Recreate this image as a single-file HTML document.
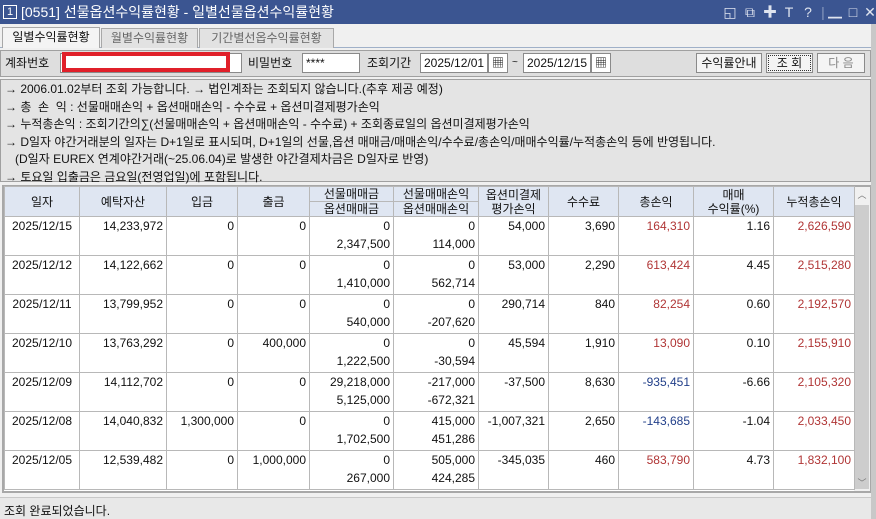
<!DOCTYPE html>
<html><head><meta charset="utf-8"><style>
*{margin:0;padding:0;box-sizing:border-box}
body{width:876px;height:519px;overflow:hidden;background:#f0f0f0;font-family:"Liberation Sans","Noto Sans CJK KR",sans-serif;font-size:12px;color:#111;position:relative}
.a{position:absolute}
.title{left:0;top:0;width:876px;height:24px;background:#3b5591;color:#fff;font-size:14px;line-height:24px;white-space:nowrap}
.ic{position:absolute;top:0;color:#dfe4ef;font-size:14px;line-height:24px;width:16px;text-align:center}
.tab{top:28px;height:20px;border:1px solid #a8a8a8;border-bottom:none;line-height:18px;text-align:center;background:#e2e2e2;color:#666;font-size:12px}
.inp{background:#fff;border:1px solid #8a8a8a;height:20px;line-height:18px;padding-left:3px}
.btn{height:20px;border:1px solid #8a8a8a;background:#f4f4f4;line-height:18px;text-align:center}
table{border-collapse:collapse;table-layout:fixed}
td{border:1px solid #b8b8b8;height:39px;vertical-align:top;text-align:right;padding:0 3px;line-height:18px;font-size:12px;background:#fff}
th{border:1px solid #b8b8b8;background:#dfe6f2;font-weight:normal;font-size:12px;line-height:14px;height:29px;padding:0}
.r{color:#b03535}.b{color:#23408a}
.info div{height:17.5px;line-height:17.5px;white-space:pre;overflow:hidden}
</style></head><body>
<div class="a title"><span style="position:absolute;left:3px;top:5px;width:14px;height:14px;border:1px solid #fff;font-size:11px;line-height:12px;text-align:center">1</span><span style="position:absolute;left:21px">[0551]  선물옵션수익률현황 - 일별선물옵션수익률현황</span>
<span class="ic" style="left:722px">◱</span><span class="ic" style="left:742px">⧉</span><span class="ic" style="left:762px">✚</span><span class="ic" style="left:781px">T</span><span class="ic" style="left:800px">?</span><span class="ic" style="left:815px;color:#8a9bc0">|</span><span class="ic" style="left:827px">▁</span><span class="ic" style="left:845px">□</span><span class="ic" style="left:862px">✕</span></div>
<div class="a" style="left:0;top:47px;width:871px;height:1px;background:#9fb0c8"></div>
<div class="a tab" style="left:2px;width:98px;background:#f4f4f4;color:#111;top:27px;height:21px">일별수익률현황</div>
<div class="a tab" style="left:101px;width:97px">월별수익률현황</div>
<div class="a tab" style="left:199px;width:135px">기간별선옵수익률현황</div>
<div class="a" style="left:0;top:50px;width:871px;height:27px;background:#dedede;border:1px solid #a0a0a0"></div>
<div class="a" style="left:5px;top:54px;line-height:18px">계좌번호</div>
<div class="a inp" style="left:60px;top:53px;width:182px"></div>
<div class="a" style="left:62px;top:52px;width:168px;height:20px;border:4px solid #e0202a;background:#fff"></div>
<div class="a" style="left:248px;top:54px;line-height:18px">비밀번호</div>
<div class="a inp" style="left:302px;top:53px;width:58px">****</div>
<div class="a" style="left:367px;top:54px;line-height:18px">조회기간</div>
<div class="a inp" style="left:420px;top:53px;width:68px">2025/12/01</div>
<div class="a btn" style="left:488px;top:53px;width:20px;background:#fff">▦</div>
<div class="a" style="left:512px;top:54px;line-height:18px;font-size:10px">~</div>
<div class="a inp" style="left:523px;top:53px;width:68px">2025/12/15</div>
<div class="a btn" style="left:591px;top:53px;width:20px;background:#fff">▦</div>
<div class="a btn" style="left:696px;top:53px;width:66px">수익률안내</div>
<div class="a btn" style="left:766px;top:53px;width:47px;outline:1px dotted #333;outline-offset:-3px">조 회</div>
<div class="a btn" style="left:817px;top:53px;width:48px;color:#888">다 음</div>
<div class="a info" style="left:0;top:79px;width:871px;height:103px;background:#e4e4e4;border:1px solid #a0a0a0;padding:1px 0 0 4px">
<div>→ 2006.01.02부터 조회 가능합니다. → 법인계좌는 조회되지 않습니다.(추후 제공 예정)</div>
<div>→ 총  손  익 : 선물매매손익 + 옵션매매손익 - 수수료 + 옵션미결제평가손익</div>
<div>→ 누적총손익 : 조회기간의∑(선물매매손익 + 옵션매매손익 - 수수료) + 조회종료일의 옵션미결제평가손익</div>
<div>→ D일자 야간거래분의 일자는 D+1일로 표시되며, D+1일의 선물,옵션 매매금/매매손익/수수료/총손익/매매수익률/누적총손익 등에 반영됩니다.</div>
<div>   (D일자 EUREX 연계야간거래(~25.06.04)로 발생한 야간결제차금은 D일자로 반영)</div>
<div>→ 토요일 입출금은 금요일(전영업일)에 포함됩니다.</div>
</div>
<div class="a" style="left:2px;top:185px;width:869px;height:308px;background:#fff;border:2px solid #a8a8a8"></div>
<div class="a" style="left:854px;top:187px;width:16px;height:304px;background:#f0f0f0"><div style="text-align:center;color:#777;font-size:9px;line-height:16px">︿</div><div style="position:absolute;left:1px;top:18px;width:14px;height:284px;background:#cdcdcd"></div><div style="position:absolute;bottom:0;width:16px;text-align:center;color:#777;font-size:9px;line-height:16px">﹀</div></div>
<table class="a" style="left:4px;top:186px;width:850px">
<colgroup><col style="width:75px"><col style="width:87px"><col style="width:71px"><col style="width:72px"><col style="width:84px"><col style="width:85px"><col style="width:70px"><col style="width:70px"><col style="width:75px"><col style="width:80px"><col style="width:81px"></colgroup>
<tr><th>일자</th><th>예탁자산</th><th>입금</th><th>출금</th><th>선물매매금<br><span style="border-top:1px solid #b8b8b8;display:block">옵션매매금</span></th><th>선물매매손익<br><span style="border-top:1px solid #b8b8b8;display:block">옵션매매손익</span></th><th>옵션미결제<br>평가손익</th><th>수수료</th><th>총손익</th><th>매매<br>수익률(%)</th><th>누적총손익</th></tr>
<tr><td style="text-align:center">2025/12/15</td><td>14,233,972</td><td>0</td><td>0</td><td>0<br>2,347,500</td><td>0<br>114,000</td><td>54,000</td><td>3,690</td><td class="r">164,310</td><td>1.16</td><td class="r">2,626,590</td></tr>
<tr><td style="text-align:center">2025/12/12</td><td>14,122,662</td><td>0</td><td>0</td><td>0<br>1,410,000</td><td>0<br>562,714</td><td>53,000</td><td>2,290</td><td class="r">613,424</td><td>4.45</td><td class="r">2,515,280</td></tr>
<tr><td style="text-align:center">2025/12/11</td><td>13,799,952</td><td>0</td><td>0</td><td>0<br>540,000</td><td>0<br>-207,620</td><td>290,714</td><td>840</td><td class="r">82,254</td><td>0.60</td><td class="r">2,192,570</td></tr>
<tr><td style="text-align:center">2025/12/10</td><td>13,763,292</td><td>0</td><td>400,000</td><td>0<br>1,222,500</td><td>0<br>-30,594</td><td>45,594</td><td>1,910</td><td class="r">13,090</td><td>0.10</td><td class="r">2,155,910</td></tr>
<tr><td style="text-align:center">2025/12/09</td><td>14,112,702</td><td>0</td><td>0</td><td>29,218,000<br>5,125,000</td><td>-217,000<br>-672,321</td><td>-37,500</td><td>8,630</td><td class="b">-935,451</td><td>-6.66</td><td class="r">2,105,320</td></tr>
<tr><td style="text-align:center">2025/12/08</td><td>14,040,832</td><td>1,300,000</td><td>0</td><td>0<br>1,702,500</td><td>415,000<br>451,286</td><td>-1,007,321</td><td>2,650</td><td class="b">-143,685</td><td>-1.04</td><td class="r">2,033,450</td></tr>
<tr><td style="text-align:center">2025/12/05</td><td>12,539,482</td><td>0</td><td>1,000,000</td><td>0<br>267,000</td><td>505,000<br>424,285</td><td>-345,035</td><td>460</td><td class="r">583,790</td><td>4.73</td><td class="r">1,832,100</td></tr>
</table>
<div class="a" style="left:0;top:497px;width:871px;height:22px;background:#e8e8e8;border-top:1px solid #c8c8c8;padding:4px 0 0 4px">조회 완료되었습니다.</div>
<div class="a" style="left:871px;top:24px;width:5px;height:495px;background:#c8c8c8"></div>
</body></html>
